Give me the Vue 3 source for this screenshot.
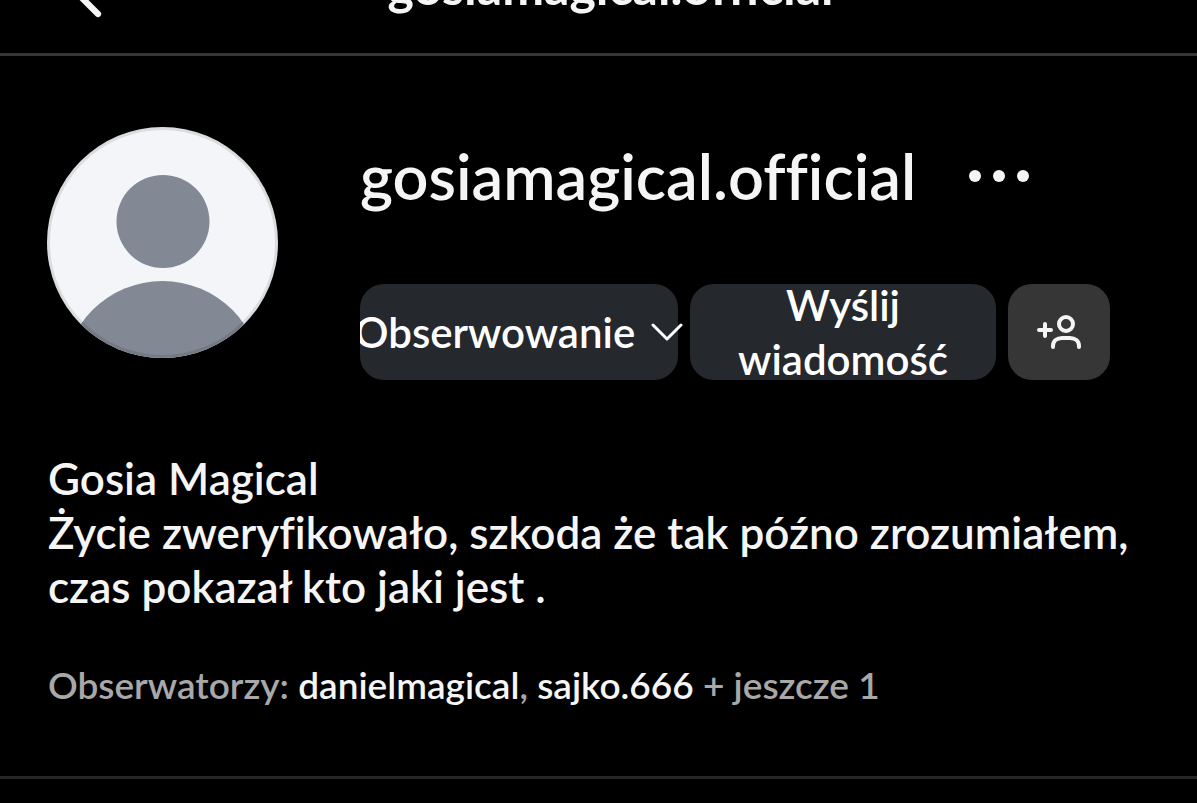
<script setup>
const username = 'gosiamagical.official'
const followers = ['danielmagical', 'sajko.666']
</script>

<template>
  <div class="page">
    <header class="topbar">
      <button class="back" type="button" aria-label="Wstecz">
        <svg viewBox="0 0 48 48" aria-hidden="true">
          <path d="M40 4 20 24 40 44" />
        </svg>
      </button>
      <h1 class="topbar-title">{{ username }}</h1>
    </header>

    <main class="profile">
      <section class="summary">
        <svg class="avatar" viewBox="0 0 231 231" role="img" aria-label="Zdjęcie profilowe">
          <defs>
            <clipPath id="avatar-clip"><circle cx="115.5" cy="115.5" r="115.5" /></clipPath>
          </defs>
          <g clip-path="url(#avatar-clip)">
            <rect width="231" height="231" fill="#f3f5f8" />
            <circle cx="116" cy="94.500" r="46.500" fill="#828894" />
            <circle cx="115.500" cy="253" r="99" fill="#828894" />
          </g>
          <circle cx="115.500" cy="115.500" r="114" fill="none" stroke="#000" stroke-opacity="0.1" stroke-width="3" />
        </svg>

        <div class="info">
          <div class="name-row">
            <h2 class="name">{{ username }}</h2>
            <button class="more" type="button" aria-label="Opcje">
              <svg viewBox="0 0 62 14" aria-hidden="true">
                <circle cx="7" cy="7" r="6" />
                <circle cx="31" cy="7" r="6" />
                <circle cx="55" cy="7" r="6" />
              </svg>
            </button>
          </div>
          <div class="actions">
            <button class="action following" type="button">
              <span>Obserwowanie</span>
              <svg class="chevron" viewBox="0 0 32 20" aria-hidden="true">
                <path d="M2 3 16 17 30 3" />
              </svg>
            </button>
            <button class="action" type="button">Wyślij wiadomość</button>
            <button class="action suggest" type="button" aria-label="Podobne konta">
              <svg viewBox="0 0 48 36" aria-hidden="true">
                <path d="M4 16h12M10 10v12" />
                <circle cx="31" cy="10" r="7" />
                <path d="M18 33v-1c0-5 4-8 9-8h8c5 0 9 3 9 8v1" />
              </svg>
            </button>
          </div>
        </div>
      </section>

      <section class="bio">
        <p class="full-name">Gosia Magical</p>
        <p>Życie zweryfikowało, szkoda że tak późno zrozumiałem, czas pokazał kto jaki jest .</p>
      </section>

      <p class="followers">
        Obserwatorzy: <a href="#">{{ followers[0] }}</a>, <a href="#">{{ followers[1] }}</a> + jeszcze 1
      </p>
    </main>
  </div>
</template>

<style>
body {
  margin: 0;
  background: #000;
}
</style>

<style scoped>
.page {
  min-height: 100vh;
  overflow: hidden;
  background: #000;
  color: #f5f5f5;
  font-family: Lato, "Open Sans", sans-serif;
  font-weight: 600;
  font-variant-ligatures: none;
}

h1,
h2,
p {
  margin: 0;
}

button {
  padding: 0;
  border: 0;
  background: none;
  color: inherit;
  font: inherit;
}

svg {
  display: block;
}

.topbar {
  display: grid;
  grid-template-columns: 108px 1fr 84px;
  align-content: end;
  align-items: end;
  height: 53px;
  border-bottom: 3px solid #363636;
}

.back {
  justify-self: end;
  margin-bottom: 34px;
}

.back svg {
  width: 60px;
  fill: none;
  stroke: #f5f5f5;
  stroke-width: 5;
  stroke-linecap: round;
  stroke-linejoin: round;
}

.topbar-title {
  padding-bottom: 40px;
  font-size: 50px;
  line-height: 54px;
  font-weight: 700;
  text-align: center;
}

.profile {
  padding: 71px 48px 67px;
  border-bottom: 3px solid #262626;
}

.summary {
  display: flex;
  gap: 82px;
  margin-left: -1px;
}

.avatar {
  flex: none;
  width: 231px;
  height: 231px;
}

.info {
  flex: 1;
  min-width: 0;
  padding: 13px 39px 0 0;
}

.name-row {
  display: flex;
  align-items: center;
  gap: 52px;
  height: 72px;
}

.name {
  font-size: 63px;
  line-height: 72px;
  font-weight: 600;
}

.more svg {
  width: 62px;
  fill: #f5f5f5;
}

.actions {
  display: grid;
  grid-template-columns: 318fr 306fr 102px;
  gap: 12px;
  margin-top: 72px;
}

.action {
  display: flex;
  align-items: center;
  justify-content: center;
  min-width: 0;
  height: 96px;
  border-radius: 24px;
  background: #25282d;
  color: #fff;
  font-size: 42px;
  line-height: 54px;
  font-weight: 600;
}

.following {
  gap: 16px;
  clip-path: inset(0 -12px 0 0);
}

.chevron {
  flex: none;
  width: 32px;
  fill: none;
  stroke: #fff;
  stroke-width: 3;
  stroke-linecap: round;
  stroke-linejoin: round;
}

.suggest {
  background: #363636;
}

.suggest svg {
  width: 48px;
  fill: none;
  stroke: #f5f5f5;
  stroke-width: 4;
  stroke-linecap: round;
}

.bio {
  margin-top: 71px;
  font-size: 44px;
  line-height: 54px;
}

.followers {
  margin-top: 48px;
  color: #a8a8a8;
  font-size: 37px;
  line-height: 48px;
}

.followers a {
  color: #f5f5f5;
  text-decoration: none;
}
</style>
